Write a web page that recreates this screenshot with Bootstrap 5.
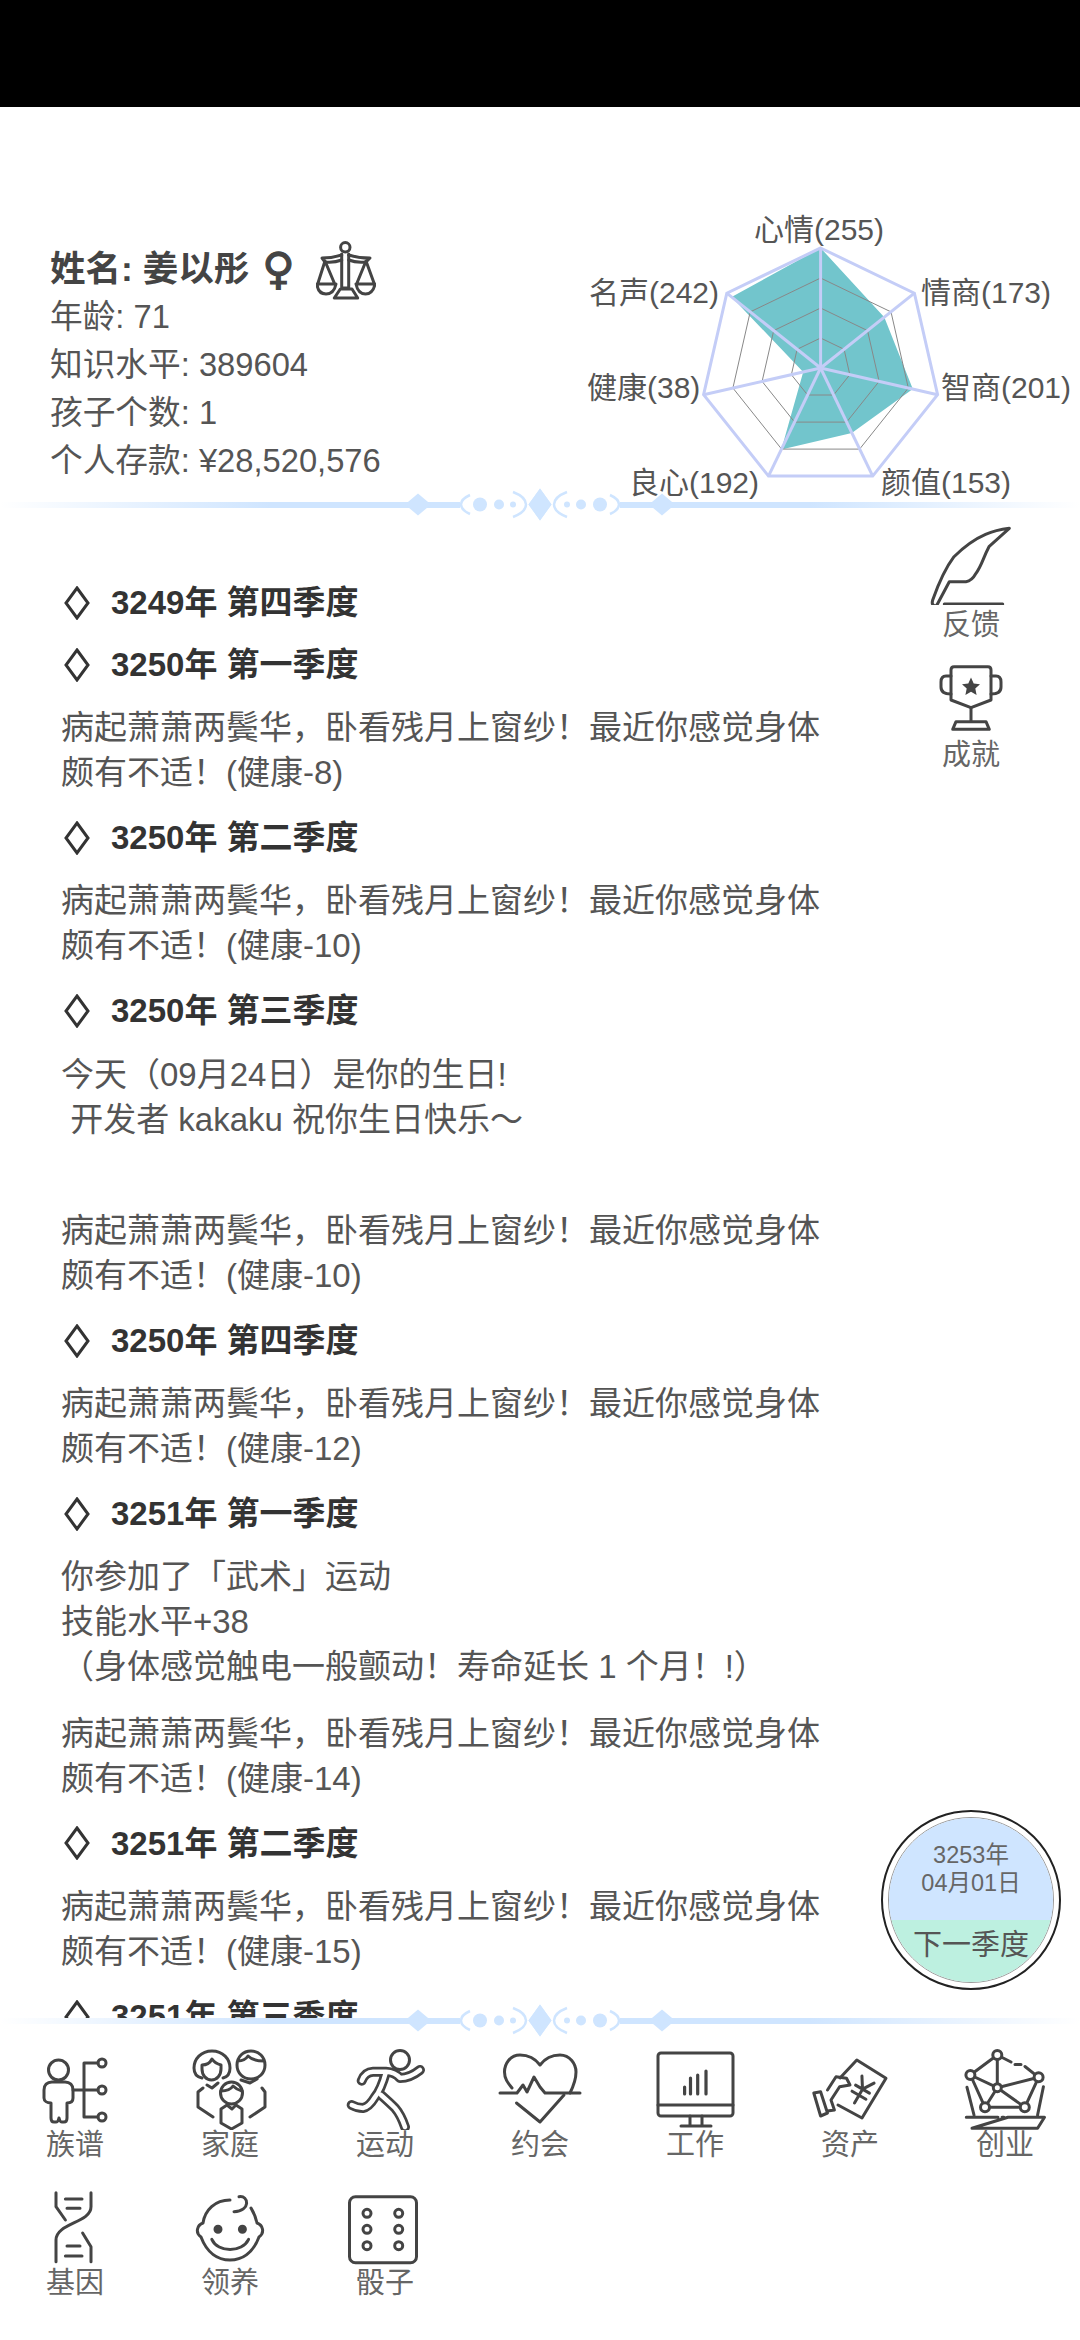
<!DOCTYPE html>
<html lang="zh">
<head>
    <meta charset="UTF-8">
    <title>人生模拟</title>
    <link href="https://cdn.jsdelivr.net/npm/bootstrap@5.3.0/dist/css/bootstrap.min.css" rel="stylesheet">
    <style>
        body { font-family: "Liberation Sans", "Noto Sans CJK SC", sans-serif; color: #555; }
        .status-strip { height: 107px; flex: none; }
        .top-panel { height: 380px; flex: none; }
        .info-col { padding: 138px 0 0 50px; font-size: 32.7px; line-height: 48px; }
        .name-line { color: #444; font-size: 35.5px; height: 48px; }
        .name-line span { font-family: "DejaVu Sans", sans-serif; font-size: 44px; font-weight: 400; -webkit-text-stroke: 1.2px #444; margin-left: 13px; }
        .name-line svg { margin-left: 22px; flex: none; }
        .radar-box { width: 500px; height: 272px; margin-top: 108px; flex: none; overflow: visible; }
        .radar-box text { font-size: 30px; fill: #555; dominant-baseline: central; }
        .orn-line { display: block; flex: none; }
        .orn-bottom { margin-top: -15px; position: relative; }
        .log-scroll { flex: 1 1 0; min-height: 0; padding: 57px 245px 0 61px; font-size: 33px; line-height: 45px; }
        .log-head { margin: 0 0 17px; font-size: 33px; line-height: 45px; font-weight: 700; color: #333; }
        .log-head svg { margin: 0 21px 0 3px; }
        .log-text { margin: 0 0 20px; white-space: pre-wrap; }
        .log-head + .log-text { margin-top: 18.2px; }
        .log-text + .log-text { margin-top: 21.5px; }
        .side-tools { top: 520px; left: 911px; width: 120px; font-size: 29px; line-height: 35px; color: #666; }
        .side-tools svg { display: block; }
        .side-gap { margin-bottom: 14.5px; padding-top: 3px; }
        .season-btn { top: 1810px; left: 881px; width: 180px; height: 180px; border: 2px solid #222; padding: 5px; background: #fff; }
        .season-inner { border: 1.5px solid #999; }
        .season-date { height: 102px; flex: none; padding-top: 23px; background: #cfe5ff; font-size: 23.5px; line-height: 28px; color: #666; }
        .season-next { flex: 1; background: #bdf0e0; font-size: 29px; line-height: 50px; color: #555; }
        .tool-grid { flex: none; height: 301px; padding-top: 6px; display: grid; grid-template-columns: repeat(7, 155px); grid-auto-rows: 138px; justify-content: center; font-size: 29px; line-height: 31px; color: #666; }
        .tool-cell svg { display: block; margin: 0 auto; }
        .ico { fill: none; stroke: #444; stroke-width: 3; stroke-linecap: round; stroke-linejoin: round; }
    </style>
</head>
<body class="d-flex flex-column vh-100 overflow-hidden position-relative bg-white">

<svg width="0" height="0" class="position-absolute">
    <defs>
        <linearGradient id="ornFade" gradientUnits="userSpaceOnUse" x1="0" y1="0" x2="1080" y2="0">
            <stop offset="0" stop-color="#cfe5ff" stop-opacity="0"/>
            <stop offset="0.25" stop-color="#cfe5ff"/>
            <stop offset="0.75" stop-color="#cfe5ff"/>
            <stop offset="1" stop-color="#cfe5ff" stop-opacity="0"/>
        </linearGradient>
        <symbol id="ornHalf" viewBox="0 0 1080 36">
            <rect x="0" y="15" width="460" height="6" fill="url(#ornFade)"/>
            <path d="M405 17.5 418 6.5 431 17.5 418 28.5z" fill="#cfe5ff"/>
            <path d="M470 8Q461 12 461 17.5T470 27" fill="none" stroke="#cfe5ff" stroke-width="2.5"/>
            <circle cx="480" cy="17.5" r="7" fill="#cfe5ff"/>
            <circle cx="499" cy="17.5" r="5" fill="#cfe5ff"/>
            <circle cx="513" cy="17.5" r="3" fill="#cfe5ff"/>
            <path d="M513 5Q526 10 526 17.5T513 30" fill="none" stroke="#cfe5ff" stroke-width="2.5"/>
            <path d="M528.5 17.5 540 1.5 551.5 17.5 540 33.5z" fill="#cfe5ff"/>
        </symbol>
    </defs>
</svg>

<div class="status-strip bg-black"></div>

<div class="top-panel d-flex">
    <div class="info-col flex-grow-1">
        <div class="name-line fw-bold d-flex align-items-center">姓名: 姜以彤<span>♀</span>
            <svg class="ico" width="60" height="62" viewBox="0 0 60 62">
                <circle cx="29.300" cy="9.300" r="4.700"/>
                <path d="M25.700 16V50H32.700V16M18.300 60H41.700L36 51H24.300Z"/>
                <path d="M25.700 17Q16 20 6 20L9 24Q18 25 25.700 22M32.700 17Q42 20 54 20L50 24Q40 25 32.700 22"/>
                <path d="M9 23 2 45M9 23 18.300 45M1 46H20Q18 56 10 56T1 46Z"/>
                <path d="M50 23 41 45M50 23 58 45M40 46H59Q57 56 49.500 56T40 46Z"/>
            </svg>
        </div>
        <div>年龄: 71</div>
        <div>知识水平: 389604</div>
        <div>孩子个数: 1</div>
        <div>个人存款: ¥28,520,576</div>
    </div>
    <svg class="radar-box" viewBox="0 0 500 272">
        <polygon id="radarFill" fill="#72c5cc"/>
        <g id="radarRings" fill="none"></g>
        <g id="radarSpokes" stroke="#c4cdf7" stroke-width="3"></g>
        <text x="239" y="14" text-anchor="middle">心情(255)</text>
        <text x="341" y="77">情商(173)</text>
        <text x="361" y="172">智商(201)</text>
        <text x="301" y="267">颜值(153)</text>
        <text x="49" y="267">良心(192)</text>
        <text x="7" y="172">健康(38)</text>
        <text x="9" y="77">名声(242)</text>
    </svg>
</div>

<svg class="orn-line" width="1080" height="36" viewBox="0 0 1080 36">
    <use href="#ornHalf" width="1080" height="36"/>
    <use href="#ornHalf" width="1080" height="36" transform="translate(1080 0) scale(-1 1)"/>
</svg>

<div class="log-scroll overflow-hidden">
    <h5 class="log-head d-flex align-items-center"><svg width="26" height="34" viewBox="0 0 26 34"><path d="M13 2 24 17 13 32 2 17z" fill="none" stroke="#333" stroke-width="3"/></svg>3249年 第四季度</h5>
    <h5 class="log-head d-flex align-items-center"><svg width="26" height="34" viewBox="0 0 26 34"><path d="M13 2 24 17 13 32 2 17z" fill="none" stroke="#333" stroke-width="3"/></svg>3250年 第一季度</h5>
    <p class="log-text">病起萧萧两鬓华，卧看残月上窗纱！最近你感觉身体颇有不适！(健康-8)</p>
    <h5 class="log-head d-flex align-items-center"><svg width="26" height="34" viewBox="0 0 26 34"><path d="M13 2 24 17 13 32 2 17z" fill="none" stroke="#333" stroke-width="3"/></svg>3250年 第二季度</h5>
    <p class="log-text">病起萧萧两鬓华，卧看残月上窗纱！最近你感觉身体颇有不适！(健康-10)</p>
    <h5 class="log-head d-flex align-items-center"><svg width="26" height="34" viewBox="0 0 26 34"><path d="M13 2 24 17 13 32 2 17z" fill="none" stroke="#333" stroke-width="3"/></svg>3250年 第三季度</h5>
    <p class="log-text">今天（09月24日）是你的生日!
 开发者 kakaku 祝你生日快乐～
 </p>
    <p class="log-text">病起萧萧两鬓华，卧看残月上窗纱！最近你感觉身体颇有不适！(健康-10)</p>
    <h5 class="log-head d-flex align-items-center"><svg width="26" height="34" viewBox="0 0 26 34"><path d="M13 2 24 17 13 32 2 17z" fill="none" stroke="#333" stroke-width="3"/></svg>3250年 第四季度</h5>
    <p class="log-text">病起萧萧两鬓华，卧看残月上窗纱！最近你感觉身体颇有不适！(健康-12)</p>
    <h5 class="log-head d-flex align-items-center"><svg width="26" height="34" viewBox="0 0 26 34"><path d="M13 2 24 17 13 32 2 17z" fill="none" stroke="#333" stroke-width="3"/></svg>3251年 第一季度</h5>
    <p class="log-text">你参加了「武术」运动
技能水平+38
（身体感觉触电一般颤动！寿命延长 1 个月！!）</p>
    <p class="log-text">病起萧萧两鬓华，卧看残月上窗纱！最近你感觉身体颇有不适！(健康-14)</p>
    <h5 class="log-head d-flex align-items-center"><svg width="26" height="34" viewBox="0 0 26 34"><path d="M13 2 24 17 13 32 2 17z" fill="none" stroke="#333" stroke-width="3"/></svg>3251年 第二季度</h5>
    <p class="log-text">病起萧萧两鬓华，卧看残月上窗纱！最近你感觉身体颇有不适！(健康-15)</p>
    <h5 class="log-head d-flex align-items-center"><svg width="26" height="34" viewBox="0 0 26 34"><path d="M13 2 24 17 13 32 2 17z" fill="none" stroke="#333" stroke-width="3"/></svg>3251年 第三季度</h5>
</div>

<svg class="orn-line orn-bottom" width="1080" height="36" viewBox="0 0 1080 36">
    <use href="#ornHalf" width="1080" height="36"/>
    <use href="#ornHalf" width="1080" height="36" transform="translate(1080 0) scale(-1 1)"/>
</svg>

<div class="tool-grid bg-white position-relative">
    <div class="tool-cell text-center">
        <svg class="ico" width="100" height="85" viewBox="0 0 100 85">
            <circle cx="33.5" cy="25" r="10"/>
            <path d="M27 37H40C45 37 48 40 48 45V53C48 56 46 58 42 58V73C42 75 41 77 39 77H37C35 77 35 76 34 73 33 76 33 77 31 77H29C27 77 26 75 26 73V58C22 58 19 56 19 53V45C19 40 22 37 27 37Z"/>
            <path d="M48 45H73M73 18H59V72H73"/>
            <circle cx="77" cy="18" r="4"/><circle cx="77" cy="45" r="4"/><circle cx="77" cy="72" r="4"/>
        </svg>
        族谱
    </div>
    <div class="tool-cell text-center">
        <svg class="ico" width="100" height="85" viewBox="0 0 100 85">
            <path d="M22 33C17 32 14 29 14 23 14 14 21 6 32 6S50 14 50 23C50 29 47 32 43 33"/>
            <path d="M22 20C27 20 30 18 32 14 34 17 37 19 41 20V24C41 30 37 35 31.500 35S22 30 22 24Z"/>
            <path d="M57 20C57 12 63 6 71 6S85 12 85 20 79 34 71 34 57 28 57 20ZM58 16C63 16 66 14 68 11 71 14 77 16 84 16"/>
            <path d="M23 43 18 47V62L33 72M82 43 85 47V62L70 72M27 40 32 43 38 38M61 35 70 38 77 34"/>
            <circle cx="51.500" cy="48" r="11"/>
            <path d="M41 46C46 46 51 44 53 41 56 44 58 45 62 46"/>
            <path d="M41 64V78L51.500 84 62 78V64L56 60 52 64 47 60Z"/>
        </svg>
        家庭
    </div>
    <div class="tool-cell text-center">
        <svg width="100" height="85" viewBox="0 0 100 85">
            <circle class="ico" cx="65" cy="15" r="9.500"/>
            <g fill="none" stroke-linecap="round" stroke-linejoin="round">
                <path stroke="#444" stroke-width="10" d="M26.700 35.700Q30 27 38 26.700H51Q60 27 65 33 75 33 85 25M51 27Q46 45 40 52 34 62 28 63 22 63 16.700 60M46 50Q55 58 60 63 66 70 70 82"/>
                <path stroke="#fff" stroke-width="4.500" d="M26.700 35.700Q30 27 38 26.700H51Q60 27 65 33 75 33 85 25M51 27Q46 45 40 52 34 62 28 63 22 63 16.700 60M46 50Q55 58 60 63 66 70 70 82"/>
            </g>
        </svg>
        运动
    </div>
    <div class="tool-cell text-center">
        <svg class="ico" width="100" height="85" viewBox="0 0 100 85">
            <path d="M22 43C18 38 14.500 34 14.500 27 14.500 19 20 10 30 10 36 10 44 12 50 20 56 12 64 10 70 10 80 10 86 19 86 27 86 34 83 42 80 48"/>
            <path d="M26.500 58 50 77 74 50"/>
            <path d="M10 48H27L33 40 37 47 44 32 50 42 55 48H90"/>
        </svg>
        约会
    </div>
    <div class="tool-cell text-center">
        <svg class="ico" width="100" height="85" viewBox="0 0 100 85">
            <rect x="13" y="8" width="75" height="63" rx="3"/>
            <path d="M13 60H88M45 71V81M57 71V81M36 81H66"/>
            <path d="M39.600 49V42M45.500 49V33M52.700 49V30M61 49V26" stroke-width="3.200"/>
        </svg>
        工作
    </div>
    <div class="tool-cell text-center">
        <svg class="ico" width="100" height="85" viewBox="0 0 100 85">
            <path d="M40 33 56.800 15 86 33.300 62 73 38 60"/>
            <path d="M27.500 45 36 31.700 46.500 33.300 50 40 39.600 41.700 31 55 34.400 65 27.500 66"/>
            <path d="M13.800 48 20.600 46.700 27.500 68 20.600 71Z"/>
            <g transform="rotate(30 62 45)"><path d="M55 33 62 44 69 33M62 44V60M54 44H70M54 51H70"/></g>
        </svg>
        资产
    </div>
    <div class="tool-cell text-center">
        <svg class="ico" width="100" height="85" viewBox="0 0 100 85">
            <path d="M42.300 10 15.400 30 30 62.300H69.800L83.600 32.300 42.300 42.700 15.400 30M42.300 10V42.700L30 62.300M42.300 42.700 69.800 62.300"/>
            <path d="M42.300 10 56 17M60 19.500H66M70 21.500 83.600 32.300"/>
            <circle cx="42.300" cy="10" r="4.500" fill="#fff"/><circle cx="15.400" cy="30" r="4.500" fill="#fff"/><circle cx="83.600" cy="32.300" r="4.500" fill="#fff"/>
            <circle cx="42.300" cy="42.700" r="4" fill="#fff"/><circle cx="30" cy="62.300" r="4.500" fill="#fff"/><circle cx="69.800" cy="62.300" r="4.500" fill="#fff"/>
            <path d="M12 42.300 19 70M88.400 41.700 82.600 70M11.300 72.300H43M47 72.300H49M53 72.300H89.500L82.600 83.300H17Z"/>
        </svg>
        创业
    </div>
    <div class="tool-cell text-center">
        <svg class="ico" width="100" height="85" viewBox="0 0 100 85">
            <path d="M31 9.700V23.700L40.400 37M66 9.700V23.700C66 40 31 40 31 57V78.700M57.600 50 66 63.700V78.700"/>
            <path d="M40.400 16H57M42 25.300H55M42 63H55M40.400 73H57"/>
        </svg>
        基因
    </div>
    <div class="tool-cell text-center">
        <svg class="ico" width="100" height="85" viewBox="0 0 100 85">
            <path d="M50 17C35 17 25 27 23 40 17 42 15 50 21 54 27 70 38 77 50 77S73 70 79 54C85 50 83 42 77 40 76 35 74 30 71 25"/>
            <path d="M59 13.700C69 12 71 28 54 28.700"/>
            <circle cx="38" cy="46.300" r="3" fill="#444"/><circle cx="62.400" cy="46.300" r="3" fill="#444"/>
            <path d="M31.800 56.300C38 70 62 70 68.600 56.300"/>
        </svg>
        领养
    </div>
    <div class="tool-cell text-center">
        <svg class="ico" width="100" height="85" viewBox="0 0 100 85">
            <rect x="14.500" y="13.700" width="67" height="66" rx="6"/>
            <circle cx="32" cy="30.300" r="4"/><circle cx="32" cy="46.300" r="4"/><circle cx="32" cy="62.700" r="4"/>
            <circle cx="63.700" cy="30.300" r="4"/><circle cx="63.700" cy="46.300" r="4"/><circle cx="63.700" cy="62.700" r="4"/>
        </svg>
        骰子
    </div>
</div>

<div class="side-tools position-absolute text-center">
    <svg class="ico" width="120" height="85" viewBox="0 0 120 85">
        <path d="M98.300 8.300C85 10 66.700 13.300 43 36.700 33 50 27 65 21.700 80 20.500 84 21.700 85 23 85.500 25 86.500 26 85 27 83L38.300 61.700H55C60 61 63 57 65 53.300 71 45 72 38 78 26.700Z"/>
        <path d="M33.300 84H91.700"/>
    </svg>
    <div class="side-gap">反馈</div>
    <svg class="ico" width="120" height="80" viewBox="0 0 120 80">
        <path d="M43 8.700H77C79 8.700 80 10 80 12V42L60 49.700 40 42V12C40 10 41 8.700 43 8.700Z"/>
        <path d="M40 18H35C31.500 18 30 20 30 24V29C30 33 32 36 40 36M80 18H85C88.500 18 90 20 90 24V29C90 33 88 36 80 36"/>
        <path d="M60 50V63.700M45 63.700H75L78.300 71.300H41.700Z"/>
        <path d="M60 19.500 62.700 25.500 69 26.300 64.300 30.500 65.600 37 60 33.800 54.400 37 55.700 30.500 51 26.300 57.300 25.500Z" fill="#444" stroke="none"/>
    </svg>
    <div>成就</div>
</div>

<div class="season-btn position-absolute rounded-circle">
    <div class="season-inner d-flex flex-column w-100 h-100 rounded-circle overflow-hidden text-center">
        <div class="season-date">3253年<br>04月01日</div>
        <div class="season-next">下一季度</div>
    </div>
</div>

<script>
    // 七维雷达图
    const values = [255, 173, 201, 153, 192, 38, 242];
    const cx = 240.6, cy = 153, maxR = 120;

    function pointAt(i, r) {
        const a = i * 2 * Math.PI / 7;
        return [(cx + r * Math.sin(a)).toFixed(1), (cy - r * Math.cos(a)).toFixed(1)];
    }

    function ringPoints(r) {
        return values.map((_, i) => pointAt(i, r).join(',')).join(' ');
    }

    const ns = 'http://www.w3.org/2000/svg';
    document.getElementById('radarFill').setAttribute('points',
        values.map((v, i) => pointAt(i, v / 255 * maxR).join(',')).join(' '));

    const rings = document.getElementById('radarRings');
    [30, 60, 90, 120].forEach(r => {
        const ring = document.createElementNS(ns, 'polygon');
        ring.setAttribute('points', ringPoints(r));
        ring.setAttribute('stroke', r === 120 ? '#c4cdf7' : '#888');
        ring.setAttribute('stroke-width', r === 120 ? 3 : 1);
        rings.appendChild(ring);
    });

    const spokes = document.getElementById('radarSpokes');
    values.forEach((_, i) => {
        const [x, y] = pointAt(i, maxR);
        const line = document.createElementNS(ns, 'line');
        line.setAttribute('x1', cx);
        line.setAttribute('y1', cy);
        line.setAttribute('x2', x);
        line.setAttribute('y2', y);
        spokes.appendChild(line);
    });
</script>
<script src="https://cdn.jsdelivr.net/npm/bootstrap@5.3.0/dist/js/bootstrap.bundle.min.js"></script>
</body>
</html>
